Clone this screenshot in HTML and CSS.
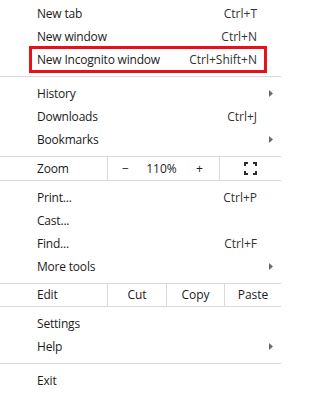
FILE: index.html
```html
<!DOCTYPE html>
<html>
<head>
<meta charset="utf-8">
<link rel="stylesheet" href="styles.css">
</head>
<body>
<div class="menu">
  <div class="group first">
    <div class="item"><span class="label">New tab</span><span class="key">Ctrl+T</span><span class="sub"></span></div>
    <div class="item"><span class="label">New window</span><span class="key">Ctrl+N</span><span class="sub"></span></div>
    <div class="item marked"><span class="label">New Incognito window</span><span class="key">Ctrl+Shift+N</span><span class="sub"></span></div>
  </div>
  <div class="sep"></div>
  <div class="group">
    <div class="item"><span class="label">History</span><span class="key"></span><span class="sub"><svg class="arrow" width="4" height="7" viewBox="0 0 4 7"><path d="M0 0L4 3.5L0 7Z"/></svg></span></div>
    <div class="item"><span class="label">Downloads</span><span class="key">Ctrl+J</span><span class="sub"></span></div>
    <div class="item"><span class="label">Bookmarks</span><span class="key"></span><span class="sub"><svg class="arrow" width="4" height="7" viewBox="0 0 4 7"><path d="M0 0L4 3.5L0 7Z"/></svg></span></div>
  </div>
  <div class="row zoom">
    <div class="cell label-cell">Zoom</div>
    <div class="cell zoom-ctrl">
      <span class="zbtn minus">−</span>
      <span class="zpct">110%</span>
      <span class="zbtn plus">+</span>
    </div>
    <div class="cell fs">
      <svg width="13" height="13" viewBox="0 0 13 13" class="fs-icon">
        <path d="M0 0H4V2H2V4H0Z"/>
        <path d="M9 0H13V4H11V2H9Z"/>
        <path d="M0 9H2V11H4V13H0Z"/>
        <path d="M13 9V13H9V11H11V9Z"/>
      </svg>
    </div>
  </div>
  <div class="group">
    <div class="item"><span class="label">Print...</span><span class="key">Ctrl+P</span><span class="sub"></span></div>
    <div class="item"><span class="label">Cast...</span><span class="key"></span><span class="sub"></span></div>
    <div class="item"><span class="label">Find...</span><span class="key">Ctrl+F</span><span class="sub"></span></div>
    <div class="item"><span class="label">More tools</span><span class="key"></span><span class="sub"><svg class="arrow" width="4" height="7" viewBox="0 0 4 7"><path d="M0 0L4 3.5L0 7Z"/></svg></span></div>
  </div>
  <div class="row edit">
    <div class="cell label-cell">Edit</div>
    <div class="cell ebtn cut">Cut</div>
    <div class="cell ebtn copy">Copy</div>
    <div class="cell ebtn paste">Paste</div>
  </div>
  <div class="group">
    <div class="item"><span class="label">Settings</span><span class="key"></span><span class="sub"></span></div>
    <div class="item"><span class="label">Help</span><span class="key"></span><span class="sub"><svg class="arrow" width="4" height="7" viewBox="0 0 4 7"><path d="M0 0L4 3.5L0 7Z"/></svg></span></div>
  </div>
  <div class="sep"></div>
  <div class="group">
    <div class="item"><span class="label">Exit</span><span class="key"></span><span class="sub"></span></div>
  </div>
</div>
</body>
</html>
```

FILE: styles.css
```css
html, body {
  margin: 0;
  padding: 0;
  background: #ffffff;
}

body {
  font-family: "Open Sans", "Noto Sans", "Liberation Sans", sans-serif;
  font-size: 12px;
  color: #1b1b1b;
  width: 281px;
  height: 396px;
  overflow: hidden;
}

.menu {
  display: flex;
  flex-direction: column;
  padding-top: 2px;
}

.group {
  display: flex;
  flex-direction: column;
}

.item {
  display: grid;
  grid-template-columns: 1fr auto 24px;
  align-items: center;
  height: 23px;
  line-height: 23px;
  padding-left: 37px;
}

.label,
.label-cell {
  letter-spacing: -0.2px;
}

.key {
  color: #333333;
}

.sub {
  display: flex;
  align-items: center;
  padding-left: 12px;
  height: 23px;
}

.arrow {
  display: block;
  fill: #6b6b6b;
}

.marked {
  position: relative;
}

.marked::after {
  content: "";
  position: absolute;
  left: 29px;
  right: 14px;
  top: -2px;
  bottom: -2px;
  border: 3px solid #e8101a;
}

.sep {
  height: 1px;
  background: #dadada;
  margin: 5px 0;
}

.row {
  display: grid;
  border-top: 1px solid #dadada;
  border-bottom: 1px solid #dadada;
  margin: 5px 0;
}

.zoom {
  grid-template-columns: 107px 112px 62px;
  height: 23px;
  line-height: 23px;
  box-sizing: content-box;
}

.edit {
  grid-template-columns: 107px 59px 58px 57px;
  height: 22px;
  line-height: 22px;
  box-sizing: content-box;
}

.cell {
  display: flex;
  align-items: center;
}

.label-cell {
  padding-left: 37px;
}

.zoom-ctrl {
  border-left: 1px solid #dadada;
  display: grid;
  grid-template-columns: 35px 37px 1fr;
  align-items: center;
}

.zbtn, .zpct {
  text-align: center;
}

.fs {
  border-left: 1px solid #dadada;
  justify-content: center;
}

.fs-icon {
  display: block;
  fill: #2b2b2b;
}

.ebtn {
  border-left: 1px solid #dadada;
  justify-content: center;
}
```
